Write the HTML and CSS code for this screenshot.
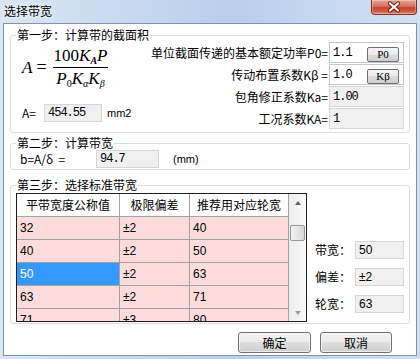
FILE: index.html
```html
<!DOCTYPE html>
<html lang="zh-CN">
<head>
    <meta charset="UTF-8">
    <title>选择带宽</title>
    <link rel="stylesheet" href="styles.css">
</head>
<body>

<div class="window">
    <div class="titlebar">
        <span class="title">选择带宽</span>
        <span class="close">
            <svg width="44" height="14" viewBox="0 0 44 14">
                <path d="M18 3.5 L26 10.5 M26 3.5 L18 10.5" stroke="#6a2014" stroke-width="4.2" stroke-linecap="round"/>
                <path d="M18 3.5 L26 10.5 M26 3.5 L18 10.5" stroke="#fff" stroke-width="2.2" stroke-linecap="round"/>
            </svg>
        </span>
    </div>

    <div class="client">
        <!-- step 1 -->
        <fieldset class="group g1">
            <legend>第一步：计算带的截面积</legend>
            <div class="g1-body">
                <div class="g1-left">
                    <div class="formula">
                        <i>A</i><span class="eq">=</span>
                        <span class="frac">
                            <span class="num">100<i>K</i><sub class="bsub"><i>A</i></sub><i>P</i></span>
                            <span class="den"><i>P</i><sub>0</sub><i>K</i><sub><i>α</i></sub><i>K</i><sub><i>β</i></sub></span>
                        </span>
                    </div>
                    <div class="area-row">
                        <span class="area-label">A=</span>
                        <span class="edit ro area-val">454.55</span>
                        <span class="unit">mm2</span>
                    </div>
                </div>
                <div class="params">
                    <div class="param"><span>单位截面传递的基本额定功率P0=</span><span class="edit has-btn">1.1<span class="mini">P0</span></span></div>
                    <div class="param"><span>传动布置系数Kβ =</span><span class="edit has-btn">1.0<span class="mini">Kβ</span></span></div>
                    <div class="param"><span>包角修正系数Ka=</span><span class="edit ro">1.00</span></div>
                    <div class="param"><span>工况系数KA=</span><span class="edit ro">1</span></div>
                </div>
            </div>
        </fieldset>

        <!-- step 2 -->
        <fieldset class="group g2">
            <legend>第二步：计算带宽</legend>
            <div class="width-row">
                <span class="b-label">b=A/δ&nbsp;&nbsp;=</span>
                <span class="edit ro b-val">94.7</span>
                <span class="b-unit">(mm)</span>
            </div>
        </fieldset>

        <!-- step 3 -->
        <fieldset class="group g3">
            <legend>第三步：选择标准带宽</legend>
            <div class="g3-body">
                <div class="grid">
                    <table class="std">
                        <colgroup><col class="c1"><col class="c2"><col class="c3"></colgroup>
                        <thead>
                            <tr><th>平带宽度公称值</th><th>极限偏差</th><th>推荐用对应轮宽</th></tr>
                        </thead>
                        <tbody>
                            <tr><td>32</td><td>±2</td><td>40</td></tr>
                            <tr><td>40</td><td>±2</td><td>50</td></tr>
                            <tr><td class="sel">50</td><td>±2</td><td>63</td></tr>
                            <tr><td>63</td><td>±2</td><td>71</td></tr>
                            <tr><td>71</td><td>±3</td><td>80</td></tr>
                        </tbody>
                    </table>
                    <div class="vscroll">
                        <span class="arr-box"><span class="arr up"></span></span>
                        <span class="thumb"></span>
                        <span class="arr-box bottom"><span class="arr down"></span></span>
                    </div>
                </div>
                <div class="picked">
                    <div class="pick"><span class="pick-label">带宽：</span><span class="edit ro sans">50</span></div>
                    <div class="pick"><span class="pick-label">偏差：</span><span class="edit ro sans">±2</span></div>
                    <div class="pick"><span class="pick-label">轮宽：</span><span class="edit ro sans">63</span></div>
                </div>
            </div>
        </fieldset>

        <div class="actions">
            <button class="btn ok">确定</button>
            <button class="btn">取消</button>
        </div>
    </div>
</div>

</body>
</html>
```

FILE: styles.css
```css
html, body {
  margin: 0;
  background: #fff;
}

body {
  font-family: "Noto Sans CJK SC", sans-serif;
  font-size: 12px;
  color: #000;
}

.window {
  width: 420px;
  height: 359px;
  box-sizing: border-box;
  padding: 0 3px 3px;
  display: flex;
  flex-direction: column;
  background: linear-gradient(90deg, #d9e6f4 0%, #c4d7ed 35%, #b9d0ea 55%, #c6d9ef 80%, #d2e1f2 100%);
}

.titlebar {
  height: 23px;
  flex: none;
  display: flex;
  justify-content: space-between;
  align-items: flex-start;
}

.title {
  margin: 4px 0 0 1px;
  line-height: 14px;
  text-shadow: 0 0 4px #fff, 0 0 8px #fff;
}

.close {
  width: 46px;
  height: 15px;
  box-sizing: border-box;
  border: 1px solid #8a3122;
  border-top: none;
  border-radius: 0 0 4px 4px;
  background: linear-gradient(#e8a597, #d8705a 45%, #c5432b 55%, #cd5a42 80%, #df8a76);
  box-shadow: inset 0 0 0 1px rgba(255, 255, 255, 0.3);
  display: flex;
}

.client {
  flex: 1;
  min-height: 0;
  background: #fff;
  border: 1px solid #8095ad;
  padding: 4px 6px 0;
  display: flex;
  flex-direction: column;
}

/* group boxes */
.group {
  margin: 0;
  min-width: 0;
  border: 1px solid #d5dfe5;
  border-radius: 3px;
  padding: 0 5px 3px;
}

.group legend {
  padding: 0 1px;
  line-height: 14px;
  font-size: 12px;
}

.g2 {
  margin-top: 3px;
  padding-bottom: 1px;
}

.g3 {
  margin-top: 8px;
  padding-top: 1px;
  padding-bottom: 1px;
}

/* edit boxes */
.edit {
  box-sizing: border-box;
  height: 18px;
  display: flex;
  align-items: center;
  padding: 0 3px;
  border: 1px solid #c4c8ce;
  background: #fff;
  font-family: "Liberation Mono", monospace;
  font-size: 12px;
  letter-spacing: -1px;
}

.edit.ro {
  background: #f0f0f0;
  border-color: #d6d6d6;
}

.edit.sans {
  font-family: "Liberation Sans", "Noto Sans CJK SC", sans-serif;
  letter-spacing: 0;
}

/* step 1 */
.g1-body {
  display: flex;
  justify-content: space-between;
}

.g1-left {
  padding-left: 6px;
}

.formula {
  margin-top: 3px;
  display: flex;
  align-items: center;
  font-family: "Liberation Serif", serif;
  font-size: 17px;
}

.formula .eq {
  margin: 0 6px 0 4px;
  font-size: 18px;
}

.frac {
  display: flex;
  flex-direction: column;
  align-items: center;
}

.num {
  line-height: 22px;
  padding: 0 1px;
  border-bottom: 1px solid #000;
}

.den {
  line-height: 22px;
}

.formula sub {
  font-size: 10px;
  line-height: 0;
  vertical-align: -3px;
}

.formula .bsub {
  font-weight: bold;
}

.area-row {
  margin-top: 14px;
  display: flex;
  align-items: center;
}

.area-label {
  width: 22px;
  line-height: 18px;
}

.area-val {
  width: 58px;
}

.unit {
  margin-left: 5px;
  font-family: "Liberation Sans", sans-serif;
  font-size: 11px;
}

.params {
  display: flex;
  flex-direction: column;
  gap: 1px;
}

.param {
  height: 21px;
  display: flex;
  justify-content: flex-end;
  align-items: center;
}

.param .edit {
  width: 75px;
  height: 21px;
  margin-left: 1px;
}

.has-btn {
  justify-content: space-between;
  padding-right: 4px;
}

.mini {
  width: 32px;
  height: 15px;
  box-sizing: border-box;
  margin-top: 3px;
  border: 1px solid #707070;
  border-radius: 2px;
  background: linear-gradient(#f4f4f4, #ebebeb 50%, #dcdcdc 50%, #cfcfcf);
  font-family: "Liberation Serif", "Noto Sans CJK SC", serif;
  font-size: 11px;
  letter-spacing: 0;
  line-height: 13px;
  text-align: center;
}

/* step 2 */
.width-row {
  display: flex;
  align-items: center;
  padding-left: 4px;
}

.b-label {
  width: 76px;
  line-height: 18px;
}

.b-val {
  width: 63px;
}

.b-unit {
  margin-left: 14px;
  font-family: "Liberation Sans", sans-serif;
  font-size: 11px;
}

/* step 3 */
.g3-body {
  display: flex;
}

.grid {
  flex: none;
  width: 291px;
  height: 129px;
  box-sizing: border-box;
  border: 1px solid #1e1e1e;
  overflow: hidden;
  display: flex;
  align-items: flex-start;
}

.std {
  width: 272px;
  table-layout: fixed;
  border-collapse: separate;
  border-spacing: 0;
  flex: none;
}

.std col.c1 { width: 103px; }
.std col.c2 { width: 70px; }
.std col.c3 { width: 99px; }

.std th,
.std td {
  padding: 0 0 0 3px;
  line-height: 22px;
  border-right: 1px solid #a3a3a3;
  border-bottom: 1px solid #a3a3a3;
  white-space: nowrap;
  overflow: hidden;
}

.std th {
  background: #fff;
  font-weight: normal;
  text-align: center;
  padding: 0;
}

.std td {
  background: #ffdcdc;
  font-family: "Liberation Sans", "Noto Sans CJK SC", sans-serif;
}

.std td.sel {
  background: #3399ff;
  color: #fff;
}

.vscroll {
  flex: none;
  width: 17px;
  height: 127px;
  background: linear-gradient(90deg, #ececec, #fafafa);
  display: flex;
  flex-direction: column;
  align-items: center;
}

.arr-box {
  width: 17px;
  height: 17px;
  display: flex;
  align-items: center;
  justify-content: center;
}

.arr-box.bottom {
  margin-top: auto;
}

.arr {
  width: 0;
  height: 0;
  border-left: 3.5px solid transparent;
  border-right: 3.5px solid transparent;
}

.arr.up {
  border-bottom: 4px solid #606060;
}

.arr.down {
  border-top: 4px solid #9a9a9a;
}

.thumb {
  margin-top: 14px;
  width: 15px;
  height: 16px;
  box-sizing: border-box;
  border: 1px solid #979797;
  border-radius: 2px;
  background: linear-gradient(90deg, #f4f4f4, #e6e6e6 50%, #d8d8d8);
}

.picked {
  margin-left: 8px;
  padding-top: 48px;
  display: flex;
  flex-direction: column;
  gap: 9px;
}

.pick {
  display: flex;
  align-items: center;
}

.pick-label {
  width: 40px;
  line-height: 18px;
}

.pick .edit {
  width: 49px;
}

/* dialog buttons */
.actions {
  margin-top: 8px;
  padding-right: 18px;
  display: flex;
  justify-content: flex-end;
  gap: 9px;
}

.btn {
  width: 72px;
  height: 21px;
  padding: 0;
  border: 1px solid #707070;
  border-radius: 3px;
  background: linear-gradient(#f2f2f2, #ebebeb 50%, #dddddd 50%, #cfcfcf);
  box-shadow: inset 0 0 0 1px rgba(255, 255, 255, 0.6);
  font-family: "Noto Sans CJK SC", sans-serif;
  font-size: 12px;
  color: #000;
}

.btn.ok {
  width: 73px;
}
```
